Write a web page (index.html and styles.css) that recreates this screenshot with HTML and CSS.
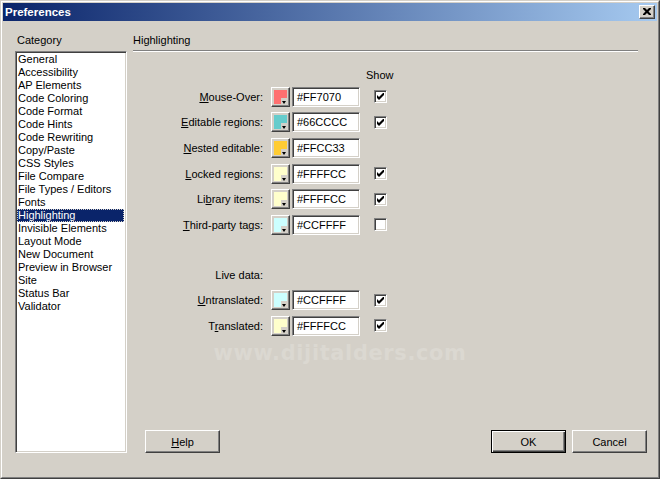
FILE: index.html
```html
<!DOCTYPE html>
<html>
<head>
<meta charset="utf-8">
<link rel="stylesheet" href="styles.css">
</head>
<body>
<div class="window">
  <div class="frame">
    <div class="titlebar">
      <span class="title">Preferences</span>
      <span class="close"><svg width="8" height="7" viewBox="0 0 8 7"><path d="M0 0h2l2 2 2-2h2v1l-2.5 2.5 2.5 2.5v1h-2l-2-2-2 2h-2v-1l2.5-2.5-2.5-2.5z" fill="#000"/></svg></span>
    </div>
    <div class="content">
      <div class="leftcol">
        <div class="label">Category</div>
        <div class="listbox">
          <div class="item">General</div>
          <div class="item">Accessibility</div>
          <div class="item">AP Elements</div>
          <div class="item">Code Coloring</div>
          <div class="item">Code Format</div>
          <div class="item">Code Hints</div>
          <div class="item">Code Rewriting</div>
          <div class="item">Copy/Paste</div>
          <div class="item">CSS Styles</div>
          <div class="item">File Compare</div>
          <div class="item">File Types / Editors</div>
          <div class="item">Fonts</div>
          <div class="item selected"><span>Highlighting</span></div>
          <div class="item">Invisible Elements</div>
          <div class="item">Layout Mode</div>
          <div class="item">New Document</div>
          <div class="item">Preview in Browser</div>
          <div class="item">Site</div>
          <div class="item">Status Bar</div>
          <div class="item">Validator</div>
        </div>
      </div>
      <div class="rightcol">
        <div class="label">Highlighting</div>
        <div class="separator"></div>
        <div class="form">
          <div class="showhead"><span class="showlabel">Show</span></div>
          <div class="row">
            <span class="rlabel"><u>M</u>ouse-Over:</span>
            <span class="swatch"><span class="fill c-ff7070"></span><span class="arrow"></span></span>
            <span class="input">#FF7070</span>
            <span class="check on"><svg width="7" height="7" viewBox="0 0 7 7"><path d="M0 2v3l2 2 5-5v-3l-5 5z" fill="#000"/></svg></span>
          </div>
          <div class="row">
            <span class="rlabel"><u>E</u>ditable regions:</span>
            <span class="swatch"><span class="fill c-66cccc"></span><span class="arrow"></span></span>
            <span class="input">#66CCCC</span>
            <span class="check on"><svg width="7" height="7" viewBox="0 0 7 7"><path d="M0 2v3l2 2 5-5v-3l-5 5z" fill="#000"/></svg></span>
          </div>
          <div class="row">
            <span class="rlabel"><u>N</u>ested editable:</span>
            <span class="swatch"><span class="fill c-ffcc33"></span><span class="arrow"></span></span>
            <span class="input">#FFCC33</span>
          </div>
          <div class="row">
            <span class="rlabel"><u>L</u>ocked regions:</span>
            <span class="swatch"><span class="fill c-ffffcc"></span><span class="arrow"></span></span>
            <span class="input">#FFFFCC</span>
            <span class="check on"><svg width="7" height="7" viewBox="0 0 7 7"><path d="M0 2v3l2 2 5-5v-3l-5 5z" fill="#000"/></svg></span>
          </div>
          <div class="row">
            <span class="rlabel">Li<u>b</u>rary items:</span>
            <span class="swatch"><span class="fill c-ffffcc"></span><span class="arrow"></span></span>
            <span class="input">#FFFFCC</span>
            <span class="check on"><svg width="7" height="7" viewBox="0 0 7 7"><path d="M0 2v3l2 2 5-5v-3l-5 5z" fill="#000"/></svg></span>
          </div>
          <div class="row">
            <span class="rlabel"><u>T</u>hird-party tags:</span>
            <span class="swatch"><span class="fill c-ccffff"></span><span class="arrow"></span></span>
            <span class="input">#CCFFFF</span>
            <span class="check"></span>
          </div>
          <div class="spacer"></div>
          <div class="row">
            <span class="rlabel">Live data:</span>
          </div>
          <div class="row">
            <span class="rlabel"><u>U</u>ntranslated:</span>
            <span class="swatch"><span class="fill c-ccffff"></span><span class="arrow"></span></span>
            <span class="input">#CCFFFF</span>
            <span class="check on"><svg width="7" height="7" viewBox="0 0 7 7"><path d="M0 2v3l2 2 5-5v-3l-5 5z" fill="#000"/></svg></span>
          </div>
          <div class="row">
            <span class="rlabel">T<u>r</u>anslated:</span>
            <span class="swatch"><span class="fill c-ffffcc"></span><span class="arrow"></span></span>
            <span class="input">#FFFFCC</span>
            <span class="check on"><svg width="7" height="7" viewBox="0 0 7 7"><path d="M0 2v3l2 2 5-5v-3l-5 5z" fill="#000"/></svg></span>
          </div>
        </div>
        <div class="buttons">
          <span class="button help"><u>H</u>elp</span>
          <span class="grow"></span>
          <span class="button default">OK</span>
          <span class="button cancel">Cancel</span>
        </div>
      </div>
    </div>
    <div class="watermark">www.dijitalders.com</div>
  </div>
</div>
</body>
</html>
```
FILE: styles.css
```css
html, body {
  margin: 0;
  padding: 0;
  background: #d4d0c8;
}
body {
  font-family: "Liberation Sans", Arial, sans-serif;
  font-size: 11px;
  color: #000;
}
.window {
  width: 660px;
  height: 479px;
  box-sizing: border-box;
  border: 1px solid;
  border-color: #d4d0c8 #404040 #404040 #d4d0c8;
  background: #d4d0c8;
}
.frame {
  position: relative;
  height: 100%;
  box-sizing: border-box;
  border: 1px solid;
  border-color: #ffffff #808080 #808080 #ffffff;
  padding: 1px;
  display: flex;
  flex-direction: column;
}
.titlebar {
  height: 18px;
  display: flex;
  align-items: center;
  justify-content: space-between;
  background: linear-gradient(to right, #0a246a, #a6caf0);
  padding-left: 2px;
  padding-right: 2px;
}
.title {
  color: #fff;
  font-weight: bold;
  font-size: 11.5px;
}
.close {
  width: 16px;
  height: 14px;
  box-sizing: border-box;
  background: #d4d0c8;
  border: 1px solid;
  border-color: #ffffff #404040 #404040 #ffffff;
  box-shadow: inset -1px -1px #808080;
  display: flex;
  align-items: center;
  justify-content: center;
  padding-bottom: 1px;
}
.content {
  flex: 1;
  display: flex;
  padding: 13px 0 23px 12px;
}
.label {
  height: 13px;
  line-height: 13px;
  padding-left: 2px;
}
.leftcol {
  width: 112px;
  display: flex;
  flex-direction: column;
}
.leftcol .label {
  margin-bottom: 4px;
}
.listbox {
  flex: 1;
  background: #fff;
  border: 1px solid;
  border-color: #808080 #ffffff #ffffff #808080;
  box-shadow: inset 1px 1px #404040, inset -1px -1px #d4d0c8;
  padding: 1px 2px 1px 1px;
}
.item {
  height: 13px;
  line-height: 13px;
  padding-left: 1px;
  white-space: nowrap;
}
.item.selected {
  background: #0a246a;
  color: #fff;
  outline: 1px dotted #d4d0c8;
  outline-offset: -1px;
}
.rightcol {
  flex: 1;
  margin-left: 6px;
  display: flex;
  flex-direction: column;
}
.rightcol .label {
  padding-left: 0;
}
.separator {
  margin-top: 3px;
  width: 505px;
  height: 1px;
  background: #808080;
  border-bottom: 1px solid #ffffff;
}
.form {
  margin-top: 17px;
  display: flex;
  flex-direction: column;
}
.showhead {
  height: 13px;
  line-height: 13px;
  margin-bottom: 2px;
  padding-left: 233px;
}
.row {
  height: 25.6px;
  display: flex;
  align-items: center;
}
.spacer {
  height: 24.4px;
}
.rlabel {
  width: 130px;
  text-align: right;
  white-space: nowrap;
  margin-right: 8px;
}
.swatch {
  position: relative;
  width: 19px;
  height: 20px;
  box-sizing: border-box;
  border: 1px solid;
  border-color: #ffffff #404040 #404040 #ffffff;
  box-shadow: inset -1px -1px #808080, inset 1px 1px #d4d0c8;
  padding: 2px 2px 2px 2px;
  margin-right: 2px;
  display: flex;
}
.fill {
  flex: 1;
}
.arrow {
  position: absolute;
  right: 1px;
  bottom: 1px;
  width: 7px;
  height: 7px;
  background: #d4d0c8;
}
.arrow::after {
  content: "";
  position: absolute;
  left: 1px;
  top: 3px;
  border-left: 2.5px solid transparent;
  border-right: 2.5px solid transparent;
  border-top: 3px solid #000;
}
.c-ff7070 { background: #ff7070; }
.c-66cccc { background: #66cccc; }
.c-ffcc33 { background: #ffcc33; }
.c-ffffcc { background: #ffffcc; }
.c-ccffff { background: #ccffff; }
.input {
  width: 68px;
  height: 20px;
  box-sizing: border-box;
  background: #fff;
  border: 1px solid;
  border-color: #808080 #ffffff #ffffff #808080;
  box-shadow: inset 1px 1px #404040, inset -1px -1px #d4d0c8;
  padding-left: 4px;
  line-height: 18px;
  margin-right: 14px;
}
.check {
  width: 13px;
  height: 13px;
  box-sizing: border-box;
  background: #fff;
  border: 1px solid;
  border-color: #808080 #ffffff #ffffff #808080;
  box-shadow: inset 1px 1px #404040, inset -1px -1px #d4d0c8;
  display: flex;
  align-items: center;
  justify-content: center;
}
.check svg {
  display: block;
}
.buttons {
  margin-top: auto;
  display: flex;
  align-items: flex-end;
  padding-left: 12px;
  padding-right: 10px;
}
.grow {
  flex: 1;
}
.button {
  width: 75px;
  height: 23px;
  box-sizing: border-box;
  border: 1px solid;
  border-color: #ffffff #404040 #404040 #ffffff;
  box-shadow: inset -1px -1px #808080, inset 1px 1px #d4d0c8;
  display: flex;
  align-items: center;
  justify-content: center;
}
.button.default {
  border: 1px solid #000;
  box-shadow: inset 1px 1px #ffffff, inset -1px -1px #404040, inset -2px -2px #808080;
  margin-right: 6px;
}
.watermark {
  position: absolute;
  left: 0;
  right: 0;
  top: 339px;
  text-align: center;
  padding-left: 20px;
  font-family: "DejaVu Sans", Verdana, sans-serif;
  font-weight: bold;
  font-size: 21px;
  letter-spacing: 0.6px;
  color: #dbd8d1;
  pointer-events: none;
}
```
